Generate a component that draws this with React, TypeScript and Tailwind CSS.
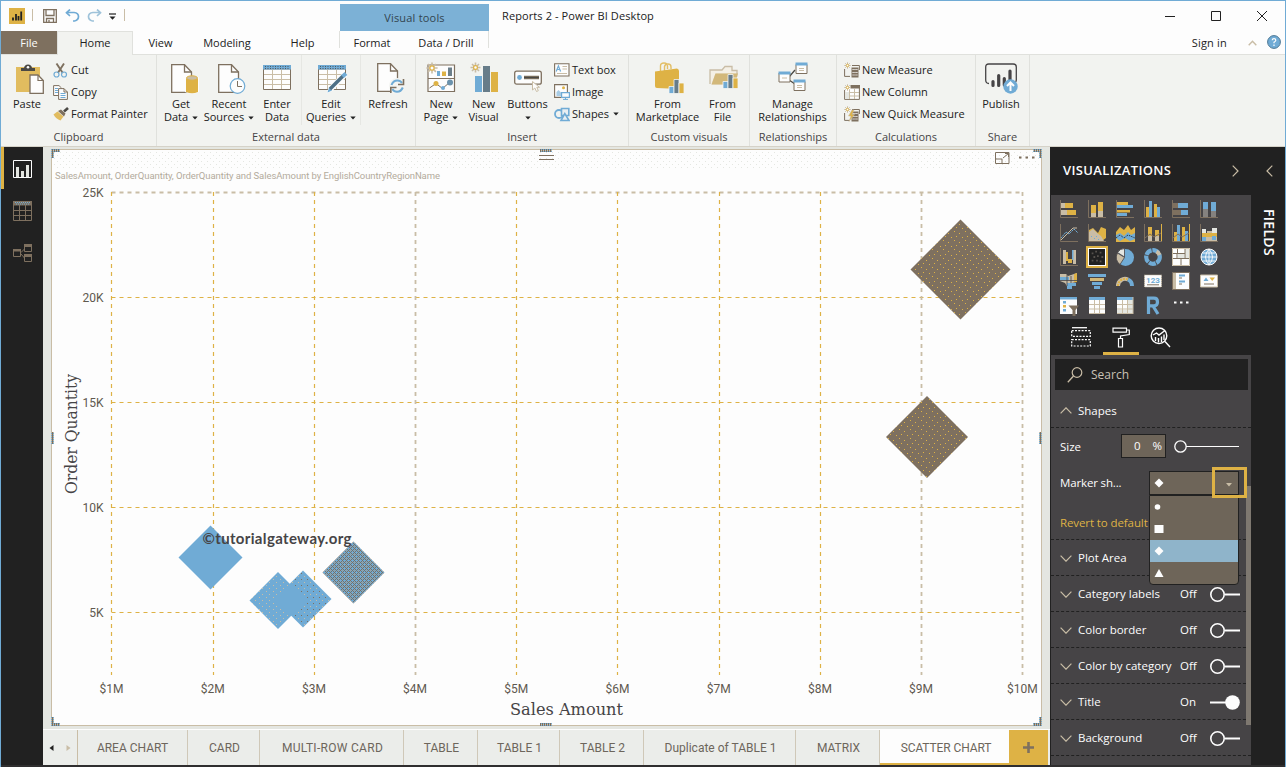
import React from "react";

const Y = "#deb245";
const B = "#70abd5";
const N = "#7e705f";
const T = "#c9bda6";
const D = "#212121";
const L = "#e4e6e1";
const W = "#fdfdfd";

type Kids = { children?: React.ReactNode };

/* ---------- helpers ---------- */

function Ico({ w, h, className = "", children }: { w: number; h: number; className?: string } & Kids) {
  return (
    <svg width={w} height={h} viewBox={`0 0 ${w} ${h}`} className={`block shrink-0 ${className}`} fill="none">
      {children}
    </svg>
  );
}

function Spark({ x, y, r = 5 }: { x: number; y: number; r?: number }) {
  const d = r * 0.7;
  return (
    <g stroke={T} strokeWidth={r > 4 ? 1.6 : 1}>
      <path d={`M${x} ${y - r}V${y + r}M${x - r} ${y}H${x + r}M${x - d} ${y - d}L${x + d} ${y + d}M${x + d} ${y - d}L${x - d} ${y + d}`} />
      <circle cx={x} cy={y} r={r * 0.38} fill={W} stroke={Y} strokeWidth={r > 4 ? 1.2 : 0.9} />
    </g>
  );
}

function Page() {
  return (
    <g>
      <path d="M.7.7H13.5L20.5 8V28.3H.7Z" fill={W} stroke={N} strokeWidth="1.3" />
      <path d="M13.5.7V8H20.5" stroke={N} strokeWidth="1.3" />
    </g>
  );
}

function Caret({ className = "ml-1" }: { className?: string }) {
  return (
    <svg width="6" height="4" viewBox="0 0 6 4" className={`inline-block align-middle ${className}`}>
      <path d="M.3.5H5.7L3 3.5Z" fill={D} />
    </svg>
  );
}

/* ---------- ribbon icons ---------- */

const PasteIcon = () => (
  <Ico w={29} h={31} className="mt-[2px] ml-[7px]">
    <path d="M0 3H24V28H0Z" fill={Y} opacity=".85" />
    <path d="M5 7V4H8Q8.500 .5 12 .5T16 4H19V7Z" fill="#4a4844" />
    <circle cx="12" cy="3.200" r="1.300" fill={W} />
    <path d="M14 11H22L27.300 16.500V29.300H14Z" fill={W} stroke={N} strokeWidth="1.300" />
    <path d="M22 11V16.500H27.300" stroke={N} strokeWidth="1.200" />
  </Ico>
);
const CutIcon = () => (
  <Ico w={15} h={15}>
    <path d="M3.500.5 9.800 10M11 .5 4.800 10" stroke={N} strokeWidth="1.900" />
    <circle cx="3.500" cy="11.500" r="2.500" stroke={B} strokeWidth="1.200" />
    <circle cx="11" cy="11.500" r="2.500" stroke={B} strokeWidth="1.200" />
  </Ico>
);
const CopyIcon = () => (
  <Ico w={15} h={15}>
    <path d="M.6.6H6L8.500 3V10.500H.6Z" fill={W} stroke={N} />
    <path d="M2 3.500H5M2 5.500H5M2 7.500H5" stroke={B} />
    <path d="M5.600 3.600H11L14.400 7V14.400H5.600Z" fill={W} stroke={N} />
    <path d="M7.500 8.500H12.500M7.500 10.500H12.500M7.500 12.500H12.500" stroke={B} />
    <path d="M11 3.600V7H14.400" stroke={N} />
  </Ico>
);
const PainterIcon = () => (
  <Ico w={16} h={14}>
    <path d="M.5 7.500 4.500 4.500 10.500 9.500 7.500 13.500Q3 12 .5 7.500Z" fill={Y} opacity=".85" />
    <path d="M5 4 8 2.500 12.500 6.500 11 9.500Z" fill={N} />
    <path d="M11 4.500 15 1" stroke="#4a4844" strokeWidth="2.600" />
  </Ico>
);
const GetDataIcon = () => (
  <Ico w={28} h={30} className="mt-[2px] ml-[7px]">
    <Page />
    <path d="M14 14V28Q20.500 31 28 28V13Z" fill={W} />
    <path d="M15 14.500V28Q21 30.500 27 28V14.500Z" fill={Y} />
    <ellipse cx="21" cy="14" rx="5.500" ry="2.200" fill={T} stroke={Y} />
  </Ico>
);
const RecentIcon = () => (
  <Ico w={28} h={30} className="mt-[2px] ml-[6px]">
    <Page />
    <circle cx="19.500" cy="22" r="7.300" fill={W} stroke={B} strokeWidth="1.200" />
    <path d="M19.500 17V22.500H24" stroke={N} />
  </Ico>
);
const Grid28 = () => (
  <g>
    <path d="M.5 5H27.500V25.500H.5Z" fill={W} stroke={N} />
    <path d="M1 10.500H27M1 15.500H27M1 20.500H27M9.500 5V25M18.500 5V25" stroke={T} />
    <path d="M0 1H28V5.500H0Z" fill={B} />
    <path d="M2 2.500H27M2 4.500H27" stroke="#4b5963" strokeDasharray="1 1.500" />
  </g>
);
const EnterIcon = () => (
  <Ico w={28} h={30} className="mt-[2px]">
    <Grid28 />
  </Ico>
);
const EditIcon = () => (
  <Ico w={30} h={31} className="mt-[2px] ml-[3px]">
    <Grid28 />
    <path d="M8.500 29.500 11 22.500 25 8.500 29.500 12 15 26.500Z" fill={W} />
    <path d="M9.500 28.500 11 23.500 14 26.500Z" fill={B} />
    <path d="M12 25 25 12" stroke="#4f7086" strokeWidth="3.600" />
    <path d="M24.500 12.500 28 9.500" stroke={B} strokeWidth="4" />
  </Ico>
);
const RefreshIcon = () => (
  <Ico w={28} h={31} className="mt-[1px] ml-[6px]">
    <Page />
    <circle cx="20" cy="23" r="8" fill="#f4f5f2" />
    <path d="M14.500 22Q16 17.500 20.500 17.500Q23.500 17.500 25 20M25.800 24.500Q24 28.800 20 28.800Q17 28.800 15.300 26" stroke={B} strokeWidth="2" />
    <path d="M26.500 16V21.500H21M13.800 30V24.500H19.500" stroke={N} strokeWidth="1.600" />
  </Ico>
);
const NewPageIcon = () => (
  <Ico w={30} h={31}>
    <path d="M2 3H28.500V29.500H2Z" fill={W} stroke={N} strokeWidth="1.200" />
    <path d="M2 16.500H28.500" stroke={N} />
    <path d="M11 9H14V14H11Z" fill={B} />
    <path d="M16 9.500H20V14H16Z" fill={Y} />
    <path d="M22 5.500H26V14H22Z" fill="#6c7f8a" />
    <path d="M3.500 26 10 21.500 16.500 26.500 23.500 20.500" stroke={N} />
    <circle cx="10" cy="21.500" r="2.500" fill={Y} />
    <circle cx="17" cy="26" r="2" fill={B} />
    <circle cx="24" cy="20.500" r="3" fill="#6c93ad" />
    <Spark x={6} y={6} r={5.600} />
  </Ico>
);
const NewVisualIcon = () => (
  <Ico w={28} h={31}>
    <path d="M5 14H12V30H5Z" fill={B} />
    <path d="M13 4H20V30H13Z" fill="#677c89" />
    <path d="M21 10H28V30H21Z" fill={Y} />
    <Spark x={5.500} y={5.500} r={5} />
  </Ico>
);
const ButtonsIcon = () => (
  <Ico w={29} h={31} className="ml-[2px]">
    <rect x=".7" y="9.200" width="26.600" height="13" rx="2" fill={W} stroke={N} strokeWidth="1.300" />
    <circle cx="5.500" cy="15.500" r="2.400" fill={B} />
    <path d="M10 15.500H25" stroke={N} strokeWidth="3.500" />
    <path d="M10 15.500H25" stroke="#4a4844" strokeWidth="1.200" />
    <path d="M18.500 19.500V28L20.800 26 22.500 29.500 24.300 28.700 22.800 25.300H25.500Z" fill={W} stroke={T} />
  </Ico>
);
const TextBoxIcon = () => (
  <Ico w={16} h={14}>
    <path d="M.6.8H15V13H.6Z" fill={W} stroke={N} strokeWidth="1.100" />
    <path d="M2.200 8.500 4.400 2.800 6.600 8.500M3 6.500H5.800" stroke={B} strokeWidth="1.200" />
    <path d="M8.500 3.500H13M8.500 6H13M3 10.500H13" stroke={T} />
  </Ico>
);
const ImageIcon = () => (
  <Ico w={16} h={16}>
    <path d="M.6.6H13.400V13.400H.6Z" fill={W} stroke={N} strokeWidth="1.100" />
    <path d="M2.500 12V8L4.500 6 7.500 9V12Z" fill={B} opacity=".6" />
    <circle cx="9.500" cy="3.800" r="1.500" fill={Y} />
    <path d="M7.600 8.600H15.400V13.400H7.600Z" fill={W} stroke={B} strokeWidth="1.200" />
    <path d="M11.500 13.500V15.400M9 15.400H14" stroke={B} />
  </Ico>
);
const ShapesIcon = () => (
  <Ico w={16} h={15}>
    <circle cx="5" cy="7" r="4" stroke={B} strokeWidth="1.800" />
    <path d="M7.500 1.500H14.800V8.500H7.500Z" fill="#e8eef2" stroke={B} strokeWidth="1.600" />
    <path d="M7 13.500 10.800 6.500 15 13.500Z" fill="#e8eef2" stroke={B} strokeWidth="1.600" />
  </Ico>
);
const MiniBars = ({ x, y }: { x: number; y: number }) => (
  <g transform={`translate(${x} ${y})`} stroke="#f4f5f2" strokeWidth=".8">
    <path d="M0 7H5V14H0Z" fill={B} />
    <path d="M5 0H10V14H5Z" fill="#677c89" />
    <path d="M10 3.500H15V14H10Z" fill={Y} />
  </g>
);
const MarketIcon = () => (
  <Ico w={30} h={32} className="ml-[2px]">
    <path d="M6.500 9V4Q6.500 1 10 1T13.500 4V7M10.500 9V4.500Q11 2 14 2T17 5V7" stroke={Y} strokeWidth="1.400" opacity=".8" />
    <path d="M1 9.500 23 6.500Q25 7 25 9V27L3 26Q1 26 1 24Z" fill={Y} />
    <MiniBars x={15} y={17.500} />
  </Ico>
);
const FileIcon = () => (
  <Ico w={30} h={32} className="ml-[2px]">
    <path d="M1 22V8H13L16 4.500H23V8.500H28V12" stroke={T} strokeWidth="1.300" fill="#f4f0e6" />
    <path d="M2.500 22.500 6.500 11.500H29L26 22.500Z" fill={T} />
    <path d="M2.500 22.500 6.500 11.500H29L26 22.500Z" fill={Y} opacity=".45" />
    <MiniBars x={14} y={12.500} />
  </Ico>
);
const RelIcon = () => (
  <Ico w={30} h={30}>
    <path d="M11 15 17 8M11 18 17 22" stroke="#4a4844" strokeWidth="1.300" />
    <g fill={W} stroke={N}>
      <path d="M1 11H12V20H1Z" />
      <path d="M18 2.500H29V11.500H18Z" />
      <path d="M16 19.500H27V28.500H16Z" />
    </g>
    <path d="M.5 9.500H12.500V12.500H.5ZM17.500.5H29.500V3.500H17.500ZM15.500 17.500H27.500V20.500H15.500Z" fill={B} />
    <path d="M4 16H9M21 6.500H26M21 8.500H26M19 23.500H24M19 25.500H24" stroke={T} />
  </Ico>
);
const CalcIcon = ({ kind }: { kind: "measure" | "column" | "quick" }) => (
  <Ico w={16} h={16}>
    {kind === "column" ? (
      <g>
        <path d="M.6 6V15.400H15.400V1.600H7" fill={W} stroke={N} />
        <path d="M1 8H5V15H1Z" fill={L} />
        <path d="M6.500 1H16V4.500H6.500Z" fill={N} />
        <path d="M5.500 6V15M10.500 5V15M5 8.500H15M5 12H15" stroke={T} />
      </g>
    ) : (
      <g>
        <path d="M.6 7V14.400H6M8 3.500H15.400V8" stroke={N} />
        <path d="M7.500 5.500H14.500V15.500H7.500Z" fill={N} />
        <path d="M8.500 7.500H13.500M8.500 10.500H13.500M8.500 13H13.500" stroke={W} strokeDasharray="1.200 .7" />
        {kind === "quick" && <path d="M8 4 4.500 10H7L5 15.500 10.500 8.500H8L10 4Z" fill={Y} stroke={T} strokeWidth=".6" />}
      </g>
    )}
    <Spark x={3.500} y={3.500} r={3.200} />
  </Ico>
);
const PublishIcon = () => (
  <Ico w={34} h={32}>
    <path d="M5 21.500Q1.700 21.500 1.700 18V5Q1.700 2 4.700 2H29.300Q32.300 2 32.300 5V18Q32.300 20 30.500 21.500" stroke="#464446" strokeWidth="1.300" />
    <path d="M9 19.500V23.500M14.700 13.500V23.500M20.300 16.500V23M26 9V20" stroke="#464446" strokeWidth="3.200" strokeLinecap="round" />
    <circle cx="26.500" cy="24.500" r="7.200" fill={B} />
    <path d="M26.500 29V21M23 24 26.500 20.500 30 24" stroke={W} strokeWidth="2" />
  </Ico>
);

/* ---------- ribbon ---------- */

function Group({ label, className, children }: { label: string; className: string } & Kids) {
  return (
    <div className={`flex h-full shrink-0 flex-col border-r border-[#e0e1dd] ${className}`}>
      <div className="flex h-[74px] items-start">{children}</div>
      <div className="text-center text-[11px] leading-4 whitespace-nowrap text-[#464446]">{label}</div>
    </div>
  );
}

function Big({ icon, a, b, caret, className }: { icon: React.ReactNode; a: string; b?: string; caret?: boolean; className: string }) {
  return (
    <div className={`flex shrink-0 flex-col items-center pt-[7px] ${className}`}>
      <div className="flex h-[35px] items-start justify-center">{icon}</div>
      <div className="text-center text-[11px] leading-[13px] whitespace-nowrap text-[#212121]">
        <div>{a}</div>
        <div>
          {b}
          {caret && <Caret className={b ? "ml-1" : ""} />}
        </div>
      </div>
    </div>
  );
}

function Small({ icon, label, caret }: { icon: React.ReactNode; label: string; caret?: boolean }) {
  return (
    <div className="flex h-[22px] items-center text-[11px] whitespace-nowrap text-[#212121]">
      <div className="w-[18px] shrink-0">{icon}</div>
      <span>{label}</span>
      {caret && <Caret />}
    </div>
  );
}

function Ribbon() {
  return (
    <div className="flex h-[92px] border-t border-[#e0e1dd] bg-[#f2f3f0]">
      <Group label="Clipboard" className="w-[156px]">
        <Big icon={<PasteIcon />} a="Paste" className="w-[52px]" />
        <div className="pt-1">
          <Small icon={<CutIcon />} label="Cut" />
          <Small icon={<CopyIcon />} label="Copy" />
          <Small icon={<PainterIcon />} label="Format Painter" />
        </div>
      </Group>
      <Group label="External data" className="w-[259px]">
        <Big icon={<GetDataIcon />} a="Get" b="Data" caret className="w-12" />
        <Big icon={<RecentIcon />} a="Recent" b="Sources" caret className="w-12" />
        <Big icon={<EnterIcon />} a="Enter" b="Data" className="h-[70px] w-[49px] border-r border-[#e6e7e3]" />
        <Big icon={<EditIcon />} a="Edit" b="Queries" caret className="h-[70px] w-[59px] border-r border-[#e6e7e3]" />
        <Big icon={<RefreshIcon />} a="Refresh" className="w-[54px]" />
      </Group>
      <Group label="Insert" className="w-[213px]">
        <Big icon={<NewPageIcon />} a="New" b="Page" caret className="w-[50px]" />
        <Big icon={<NewVisualIcon />} a="New" b="Visual" className="w-[35px]" />
        <Big icon={<ButtonsIcon />} a="Buttons" b="" caret className="w-[53px]" />
        <div className="pt-1">
          <Small icon={<TextBoxIcon />} label="Text box" />
          <Small icon={<ImageIcon />} label="Image" />
          <Small icon={<ShapesIcon />} label="Shapes" caret />
        </div>
      </Group>
      <Group label="Custom visuals" className="w-[121px]">
        <Big icon={<MarketIcon />} a="From" b="Marketplace" className="w-[77px]" />
        <Big icon={<FileIcon />} a="From" b="File" className="w-[33px]" />
      </Group>
      <Group label="Relationships" className="w-[87px]">
        <Big icon={<RelIcon />} a="Manage" b="Relationships" className="w-[85px]" />
      </Group>
      <Group label="Calculations" className="w-[139px]">
        <div className="pt-1 pl-[7px]">
          <Small icon={<CalcIcon kind="measure" />} label="New Measure" />
          <Small icon={<CalcIcon kind="column" />} label="New Column" />
          <Small icon={<CalcIcon kind="quick" />} label="New Quick Measure" />
        </div>
      </Group>
      <Group label="Share" className="w-[54px]">
        <Big icon={<PublishIcon />} a="Publish" className="w-[50px]" />
      </Group>
    </div>
  );
}

/* ---------- title bar and tabs ---------- */

function TitleBar() {
  return (
    <div className="flex h-[30px] items-center">
      <Ico w={16} h={16} className="mb-px ml-2">
        <path d="M0 0H16V16H0Z" fill={Y} />
        <path d="M4 9.500V12.500M7 6V12.500M9.500 8V12.500M12.200 3.500V12.500" stroke={D} strokeWidth="1.800" />
      </Ico>
      <div className="mb-0.5 ml-[7px] h-3 w-px bg-[#c9bda6]" />
      <Ico w={14} h={14} className="ml-[10px]">
        <path d="M.7.7H13.300V13.300H.7ZM3 1V6.500H11V1M3.500 13V9.500H10.500V13M6 11V13" stroke={N} strokeWidth="1.300" />
      </Ico>
      <Ico w={15} h={13} className="mb-px ml-2">
        <path d="M1.500 3.500H9Q13.500 4 13.500 7.500T9.500 12H8" stroke={B} strokeWidth="1.700" />
        <path d="M5 .5 1.500 3.700 5 7" stroke={B} strokeWidth="1.700" />
      </Ico>
      <Ico w={15} h={13} className="mb-px ml-[7px]">
        <path d="M13.500 3.500H6Q1.500 4 1.500 7.500T5.500 12H7" stroke="#9fc3da" strokeWidth="1.700" />
        <path d="M10 .5 13.500 3.700 10 7" stroke="#9fc3da" strokeWidth="1.700" />
      </Ico>
      <Ico w={7} h={7} className="mt-px ml-[7px]">
        <path d="M0 1H7" stroke={D} strokeWidth="1.200" />
        <path d="M.5 3.500H6.500L3.500 6.800Z" fill={D} />
      </Ico>
      <div className="mb-0.5 ml-2 h-3 w-px bg-[#c9bda6]" />
      <div className="ml-[215px] flex h-[27px] w-[149px] items-center justify-center self-end bg-[#7cb1d6] pt-0.5 text-[11px] tracking-[.2px] text-[#33454f]">
        Visual tools
      </div>
      <div className="ml-[13px] text-[11px] tracking-[.1px] whitespace-nowrap text-[#212121]">Reports 2 - Power BI Desktop</div>
      <div className="ml-auto flex items-center gap-9 pr-[18px] pb-px">
        <Ico w={10} h={10}>
          <path d="M0 5.500H10" stroke={D} />
        </Ico>
        <Ico w={10} h={10}>
          <path d="M.5.500H9.500V9.500H.5Z" stroke={D} />
        </Ico>
        <Ico w={10} h={10}>
          <path d="M0 0 10 10M10 0 0 10" stroke={D} />
        </Ico>
      </div>
    </div>
  );
}

function MenuTabs() {
  return (
    <div className="flex h-[23px] text-[11px] leading-[23px] text-[#212121]">
      <div className="w-[56px] bg-[#7e705f] text-center text-[#fdfdfd]">File</div>
      <div className="z-10 -mb-px w-[76px] border-x border-t border-[#e0e1dd] bg-[#f2f3f0] text-center leading-[22px]">Home</div>
      <div className="w-[55px] text-center">View</div>
      <div className="w-[78px] text-center">Modeling</div>
      <div className="w-[73px] text-center">Help</div>
      <div className="flex h-[17px] w-[150px] border-x border-[#e0e1dd]">
        <div className="w-[64px] text-center">Format</div>
        <div className="w-[84px] text-center tracking-[.05px]">Data / Drill</div>
      </div>
      <div className="ml-auto flex items-center">
        <span className="mr-[21px] tracking-[.2px]">Sign in</span>
        <Ico w={9} h={6}>
          <path d="M.7 5.300 4.500 1.300 8.300 5.300" stroke={T} strokeWidth="1.400" />
        </Ico>
        <Ico w={14} h={14} className="mr-1 mb-0.5 ml-[10px]">
          <circle cx="7" cy="7" r="6.400" fill={B} stroke="#4e7894" />
          <path d="M5.200 5.300Q5.300 3.700 7 3.700T8.800 5.300Q8.800 6.300 7 7.200V8.300M7 9.500V11" stroke={W} strokeWidth="1.200" />
        </Ico>
      </div>
    </div>
  );
}

/* ---------- left rail ---------- */

function Rail() {
  return (
    <div className="flex w-[42px] shrink-0 flex-col bg-[#212121]">
      <div className="flex h-[42px] items-center border-l-[3px] border-[#deb245] pt-0.5 pl-[9px]">
        <Ico w={19} h={18}>
          <path d="M.5.500H18.500V17.500H.5Z" stroke={W} />
          <path d="M4.500 7V17M9.500 11V17M14.500 5V17" stroke={L} strokeWidth="3" />
        </Ico>
      </div>
      <div className="flex h-[44px] items-center pl-3">
        <Ico w={19} h={20}>
          <path d="M.5.500H18.500V19.500H.5ZM.5 9.500H18.500M.5 14.500H18.500M6.500 4V19M12.500 4V19" stroke={N} />
          <path d="M0 0H19V4.500H0Z" fill={N} />
          <path d="M2 1.500H17M3 3H17" stroke={B} strokeDasharray="1 1" />
        </Ico>
      </div>
      <div className="flex h-[40px] items-center pl-3">
        <Ico w={19} h={18}>
          <path d="M.5 6H7.500V12.500H.5ZM11.500 1.500H18.500V7.500H11.500ZM11.500 11.500H18.500V17.500H11.500ZM8 8.500 11.500 5M8 10 11.500 14" stroke={N} />
          <path d="M0 5H8V7.500H0ZM11 0H19V3H11ZM11 10H19V13H11Z" fill={N} />
        </Ico>
      </div>
    </div>
  );
}

/* ---------- chart ---------- */

const xs = Array.from({ length: 10 }, (_, i) => 60.500 + i * 101.200);
const ys = [43.500, 148.500, 253.500, 358.500, 463.500];
const marks = [
  { x: 909.500, y: 120.500, r: 50, f: "url(#pd)" },
  { x: 876, y: 288, r: 41, f: "url(#pd)" },
  { x: 159.500, y: 408.500, r: 32, f: B },
  { x: 252, y: 450, r: 28.500, f: "url(#pb)" },
  { x: 227, y: 451.500, r: 28.500, f: "url(#pl)" },
  { x: 239.500, y: 451, r: 16, f: B },
  { x: 302.500, y: 423.500, r: 31, f: "url(#pm)" },
];

function Chart() {
  return (
    <div className="ml-2 mt-[2px] h-[577px] w-[991px] bg-[#fdfdfd]">
      <svg width="991" height="577" viewBox="0 0 991 577" className="block overflow-visible" fontFamily="Roboto, sans-serif">
        <defs>
          <pattern id="pd" width="11" height="9" patternUnits="userSpaceOnUse">
            <path d="M0 0H11V9H0Z" fill={N} />
            <path d="M1 1H2V2H1ZM6 3H7V4H6ZM3 6H4V7H3ZM9 7H10V8H9Z" fill={Y} />
          </pattern>
          <pattern id="pb" width="6" height="6" patternUnits="userSpaceOnUse">
            <path d="M0 0H6V6H0Z" fill={B} />
            <path d="M1 1H2V2H1Z" fill={T} />
            <path d="M4 4H5V5H4Z" fill={N} />
          </pattern>
          <pattern id="pl" width="7" height="6" patternUnits="userSpaceOnUse">
            <path d="M0 0H7V6H0Z" fill={B} />
            <path d="M1 1H2V2H1ZM5 4H6V5H5Z" fill={T} />
          </pattern>
          <pattern id="pm" width="4" height="4" patternUnits="userSpaceOnUse">
            <path d="M0 0H4V4H0Z" fill={B} />
            <path d="M0 0H1V1H0ZM1 1H2V2H1ZM2 2H3V3H2ZM3 3H4V4H3ZM2 0H3V1H2ZM0 2H1V3H0Z" fill={N} />
            <path d="M3 1H4V2H3Z" fill="#a59a88" />
          </pattern>
          <pattern id="pg" width="6" height="6" patternUnits="userSpaceOnUse">
            <path d="M0 0H1V1H0ZM3 3H4V4H3Z" fill={L} />
          </pattern>
          <pattern id="ph" width="2" height="2" patternUnits="userSpaceOnUse">
            <path d="M0 0H2V2H0Z" fill={T} />
            <path d="M0 0H1V1H0Z" fill={B} />
            <path d="M1 0H2V2H1Z" fill={N} />
          </pattern>
        </defs>
        <path d="M1 1H990V20H1Z" fill="url(#pg)" />
        <path d="M.5.500H990.500V576.500H.5Z" stroke={T} fill="none" />
        <g stroke={Y} strokeDasharray="4 4">
          {ys.map((y, i) => (
            <path key={y} d={`M60.500 ${y}H971.500`} stroke={i === 0 ? T : Y} strokeWidth={i === 0 ? 1.800 : 1.200} />
          ))}
          {xs.map((x, i) => (
            <path key={x} d={`M${Math.round(x - 0.2) + 0.5} 43V526`} stroke={i === 3 || i > 7 ? T : Y} strokeWidth={i === 3 || i > 7 ? 1.800 : 1.200} />
          ))}
        </g>
        {marks.map((m) => (
          <path key={m.x} d={`M${m.x} ${m.y - m.r}L${m.x + m.r} ${m.y}L${m.x} ${m.y + m.r}L${m.x - m.r} ${m.y}Z`} fill={m.f} />
        ))}
        <text x="4" y="30" fontSize="9.500" fill="#b3ab9c" textLength="385">
          SalesAmount, OrderQuantity, OrderQuantity and SalesAmount by EnglishCountryRegionName
        </text>
        <g fontSize="12" fill="#5f594f">
          {["25K", "20K", "15K", "10K", "5K"].map((s, i) => (
            <text key={s} x="52.500" y={ys[i] + 4.500} textAnchor="end">
              {s}
            </text>
          ))}
          {xs.map((x, i) => (
            <text key={x} x={x} y="544" textAnchor="middle">
              {`$${i + 1}M`}
            </text>
          ))}
        </g>
        <g fontFamily="'DejaVu Serif Condensed', 'DejaVu Serif', serif" fontSize="17" fill="#464446">
          <text x="459" y="566" textLength="113" lengthAdjust="spacingAndGlyphs">
            Sales Amount
          </text>
          <text transform="translate(26 345) rotate(-90)" textLength="120" lengthAdjust="spacingAndGlyphs">
            Order Quantity
          </text>
        </g>
        <text x="151.500" y="395" fontFamily="Lato, sans-serif" fontWeight="700" fontSize="15" fill="#464446" textLength="149">
          ©tutorialgateway.org
        </text>
        <path d="M488 6.500H503M488 10.500H503" stroke={N} />
        <g stroke={N}>
          <path d="M944.500 3.500H958V14.500H944.500ZM944.500 10H951V14.500M952 9 957.500 4.500M954 4.500H957.500V8" fill="none" />
          <path d="M968 8.500H970.500M974.500 8.500H977M981 8.500H983.500" strokeWidth="2" />
        </g>
        <path
          d="M0 0H9V3H3V9H0ZM991 0H982V3H988V9H991ZM0 577H9V574H3V568H0ZM991 577H982V574H988V568H991ZM489 0H501V3H489ZM489 574H501V577H489ZM0 283H3V295H0ZM988 283H991V295H988Z"
          fill="url(#ph)"
        />
      </svg>
    </div>
  );
}

/* ---------- page tabs ---------- */

const tabs: [string, string][] = [
  ["AREA CHART", "w-[110px]"],
  ["CARD", "w-[72px] pl-0.5"],
  ["MULTI-ROW CARD", "w-[144px] pl-0.5 tracking-[.3px]"],
  ["TABLE", "w-[74px] pl-0.5"],
  ["TABLE 1", "w-[82px] pl-0.5"],
  ["TABLE 2", "w-[84px] pl-0.5"],
  ["Duplicate of TABLE 1", "w-[152px] pl-0.5"],
  ["MATRIX", "w-[84px] pl-0.5"],
];

function PageTabs() {
  return (
    <div className="mt-auto flex h-9 border-t border-[#fdfdfd] bg-[#ebedea] font-[Roboto,sans-serif] text-[12px] text-[#6d665c]">
      <div className="flex w-[35px] items-center gap-3 border-r border-[#c9bda6] pl-[6px]">
        <Ico w={5} h={6}>
          <path d="M4.500 0V6L.5 3Z" fill={D} />
        </Ico>
        <Ico w={5} h={6}>
          <path d="M.5 0V6L4.500 3Z" fill={T} />
        </Ico>
      </div>
      {tabs.map(([name, w]) => (
        <div key={name} className={`flex shrink-0 items-center justify-center border-r border-[#cfc8b8] whitespace-nowrap ${w}`}>
          {name}
        </div>
      ))}
      <div className="flex w-[129px] shrink-0 items-center justify-center border-b-2 border-[#deb245] bg-[#fdfdfd] pt-[2px] pl-[3px] tracking-[-.1px] whitespace-nowrap">
        SCATTER CHART
      </div>
      <div className="flex w-[39px] items-center justify-center bg-[#deb245]">
        <Ico w={11} h={11}>
          <path d="M5.500 0V11M0 5.500H11" stroke={N} strokeWidth="2.600" />
        </Ico>
      </div>
    </div>
  );
}

/* ---------- visualizations pane ---------- */

const axis = <path d="M.5 0V17.500H18" stroke={N} />;
const visIcons: React.ReactNode[] = [
  <>{axis}<path d="M1 3H5V8H1ZM1 10H7V15H1Z" fill={T} /><path d="M5 3H13V8H5ZM7 10H16V15H7Z" fill={Y} /></>,
  <>{axis}<path d="M3 5H8V13H3ZM10 2H15V11H10Z" fill={Y} /><path d="M3 13H8V17H3ZM10 11H15V17H10Z" fill={T} /></>,
  <>{axis}<path d="M1 2H12V5H1ZM1 10H14V12.500H1Z" fill={Y} /><path d="M1 5H17V8H1ZM1 13H11V16H1Z" fill={B} /></>,
  <>{axis}<path d="M2 7H5V17H2ZM10 4H13V17H10Z" fill={Y} /><path d="M5 1H8V17H5ZM13 7H16V17H13Z" fill={B} /></>,
  <>{axis}<path d="M1 3H6V8H1ZM1 10H9V15H1Z" fill={N} /><path d="M6 3H16V8H6ZM9 10H16V15H9Z" fill={B} /></>,
  <>{axis}<path d="M3 2H8V9H3ZM11 2H16V11H11Z" fill={B} /><path d="M3 9H8V17H3ZM11 11H16V17H11Z" fill="#85827f" /></>,
  <>{axis}<path d="M1 14 6 8 9 10 14 5 18 9" stroke={B} strokeDasharray="2 .6" /><path d="M1 16 6 11 13 4 17 4" stroke={T} /></>,
  <>{axis}<path d="M1 17V6L5 4 10 9 13 3 18 5V14L14 17Z" fill={Y} /><path d="M1 17V8L5 5 9 9 13 12 16 17Z" fill={T} /><path d="M3 12H4V13H3ZM6 14H7V15H6ZM8 12H9V13H8ZM10 15H11V16H10Z" fill={B} /></>,
  <><path d="M0 18V8L4 3 8 6 12 1 15 6 19 3V18Z" fill={Y} /><path d="M0 11 4 9 8 12 12 8 15 11 19 9V15L14 17 9 14 4 17 0 14Z" fill={B} /><path d="M0 14 4 11 8 14 12 11 19 14" stroke={D} strokeDasharray="1 1" /></>,
  <>{axis}<path d="M17.500 0V17" stroke={Y} /><path d="M4 3H8V12H4ZM11 6H15V12H11Z" fill={Y} /><path d="M4 12H8V17H4ZM11 12H15V17H11Z" fill={T} /><path d="M1 14 6 10 10 13 17 9" stroke={N} /></>,
  <>{axis}<path d="M17.500 0V17" stroke={Y} /><path d="M2 8H5V17H2ZM10 3H13V17H10Z" fill={Y} /><path d="M5 1H8V17H5ZM13 7H16V17H13Z" fill={B} /><path d="M1 14 6 10 10 13 17 9" stroke={N} /></>,
  <>{axis}<path d="M2 5H6V9H2ZM12 4H17V9H12Z" fill={L} /><path d="M2 9H17V13H2Z" fill={Y} /><path d="M2 13H17V17H2ZM7 7H12V9H7Z" fill={T} /><path d="M2 13H6V17H2ZM12 12H16V16H12Z" fill={B} /></>,
  <>{axis}<path d="M3 2H6V16H3ZM13 2H16V16H13Z" fill={T} /><path d="M6 4H8V13H6ZM8 11H12V15H8Z" fill={Y} /><path d="M12 2H13.500V12H12Z" fill={B} /></>,
  <><path d="M0 0H18V18H0Z" fill={D} /><path d="M3 4H5V6H3ZM7 2H9V4H7ZM12 3H14V5H12ZM5 8H7V10H5ZM9 7H11V9H9ZM14 8H16V10H14ZM3 12H5V14H3ZM8 12H10V14H8ZM12 13H14V15H12Z" fill="#57524d" /></>,
  <><circle cx="9.500" cy="9.500" r="8.500" fill={B} /><path d="M8.500 9V.5A8.500 8.500 0 0 0 1.500 4.500Z" fill={L} stroke="#464446" strokeWidth=".8" /><path d="M8.500 9.500 1.500 5A8.500 8.500 0 0 0 4 16.500Z" fill={T} stroke="#464446" strokeWidth=".8" /></>,
  <><circle cx="9" cy="9" r="6.800" stroke={B} strokeWidth="4.200" strokeDasharray="7 .8" /><path d="M12.500 3.500A6.500 6.500 0 0 1 15.500 7" stroke={T} strokeWidth="4" /></>,
  <><path d="M0 0H18V18H0Z" fill={W} /><path d="M6 6H12V10H6ZM13 1H17V10H13Z" fill={L} /><path d="M0 10.500H18M5.500 5V0M0 5.500H13M5 5V10M13 0V10M9 11V18" stroke={N} /><path d="M.5.500H17.500V17.500H.5Z" stroke={T} /></>,
  <><circle cx="9" cy="9" r="8" fill={B} stroke={W} /><path d="M1 9H17M2.500 5H15.500M2.500 13H15.500M9 1V17M9 1Q2 9 9 17M9 1Q16 9 9 17" stroke={W} strokeWidth=".9" /></>,
  <><path d="M0 2H6L8 4 17 1V10L12 11 8 16 5 11 0 9Z" fill={T} /><path d="M0 5H9V8H0ZM7 11H16V14H12V17H7Z" fill={B} /><path d="M14 2 17 1V10H14Z" fill={Y} /><path d="M0 8.500H17M7 3V14M11 4V11" stroke="#464446" strokeWidth=".8" /></>,
  <><path d="M0 2H18V5H0ZM4 10H14V13H4ZM6 14H12V17H6Z" fill={B} /><path d="M2 6H16V9H2Z" fill={T} /><path d="M2 6H16V9H2Z" fill={Y} opacity=".5" /></>,
  <><path d="M2 14A7 7 0 0 1 12 7.500" stroke={T} strokeWidth="4" /><path d="M2 14A7 7 0 0 1 12 7.500" stroke={Y} strokeWidth="2" strokeDasharray="2 1" /><path d="M12 7.500A7 7 0 0 1 16 14" stroke={B} strokeWidth="4" /></>,
  <><path d="M.5 3H17.500V15H.5Z" fill={W} stroke={T} strokeDasharray="1 1" /><text x="9" y="11" fontSize="8" fontWeight="700" textAnchor="middle" fill={B} fontFamily="Roboto, sans-serif">123</text><path d="M3 12.800H15" stroke={N} /></>,
  <><path d="M.5.500H17.500V17.500H.5Z" fill={W} stroke={N} /><path d="M1 1H4V17H1Z" fill={T} /><path d="M7 3.500H13M7 9.500H13" stroke={B} strokeWidth="2" /><path d="M7 6H10M7 12H10" stroke={N} /></>,
  <><path d="M.5 3H17.500V15H.5Z" fill={W} stroke={T} /><path d="M3.500 9 6 5.500 8.500 9Z" fill={B} /><path d="M9.500 5.500H15L12.200 9Z" fill={Y} /><path d="M4 12H14" stroke={N} /></>,
  <><path d="M0 1H17V18H0Z" fill={W} /><path d="M0 1H17V3.500H0Z" fill={B} /><path d="M3 5H6V7.500H3Z" fill={B} /><path d="M3 9H6V11.500H3Z" fill={Y} /><path d="M3 13H6V15.500H3Z" fill={B} /><path d="M8.500 9.500H19L15.500 14V20H12.500V14Z" fill={N} /></>,
  <><path d="M1 1H17V18H1Z" fill={W} /><path d="M1 1H17V4H1Z" fill={B} /><path d="M1 8.500H17M1 13H17M6.500 4V18M11.500 4V18M1 17.500H17" stroke={T} /></>,
  <><path d="M1 1H17V18H1Z" fill={W} /><path d="M12 4H17V18H12ZM1 14H17V18H1Z" fill={L} /><path d="M1 1H17V4H1Z" fill={B} /><path d="M1 8.500H17M1 13H17M6.500 4V18M11.500 4V18M1 17.500H17M17 1V18" stroke={T} /></>,
  <path d="M4.500 18V2.200H10Q13.500 2.200 13.500 6T10 9.800H5M9 10 14 18" stroke={B} strokeWidth="3.200" />,
  <path d="M2 6.500H4.500M8 6.500H10.500M14 6.500H16.500" stroke={W} strokeWidth="2" />,
];

function VisGrid() {
  return (
    <div className="h-[124px] bg-[#464446] pt-[5px] pl-[9px]">
      <div className="grid grid-cols-[repeat(6,28px)] auto-rows-[24px]">
        {visIcons.map((v, i) => (
          <div key={i} className={i === 13 ? "-mt-0.5 -ml-0.5 h-[22px] w-[22px] border-2 border-[#deb245] bg-[#fdfdfd] p-px" : ""}>
            <svg width={i === 13 ? 16 : 18} height={i === 13 ? 16 : 18} viewBox="0 0 18 18" className="block overflow-visible" fill="none">
              {v}
            </svg>
          </div>
        ))}
      </div>
    </div>
  );
}

const Chev = ({ up }: { up?: boolean }) => (
  <Ico w={12} h={7}>
    <path d={up ? "M.6 6.300 6 .8 11.400 6.300" : "M.6.700 6 6.200 11.400.700"} stroke={T} strokeWidth="1.200" />
  </Ico>
);

function Toggle({ on }: { on?: boolean }) {
  return (
    <Ico w={30} h={16}>
      <path d={on ? "M0 8.500H16" : "M15 8.500H30"} stroke={W} strokeWidth="2" />
      <circle cx={on ? 22.500 : 7.500} cy="8.500" r={on ? 7.300 : 6.700} stroke={on ? undefined : W} strokeWidth="1.600" fill={on ? W : "none"} />
    </Ico>
  );
}

function Row({ label, state }: { label: string; state?: "On" | "Off" }) {
  return (
    <div className="flex h-9 shrink-0 items-center border-b border-dashed border-[#212121] pt-px pl-[9px]">
      <Chev />
      <span className="w-[108px] shrink-0 pl-[6px] whitespace-nowrap">{label}</span>
      {state && (
        <>
          <span className="w-[30px] shrink-0">{state}</span>
          <Toggle on={state === "On"} />
        </>
      )}
    </div>
  );
}

function Dropdown() {
  const row = "flex h-[22px] items-center pl-1";
  return (
    <div className="absolute top-[23px] -left-px z-10 w-[90px] overflow-hidden rounded-b-sm border border-[#212121] bg-[#6e6559]">
      <div className={row}>
        <Ico w={10} h={10}><circle cx="3.500" cy="5" r="2.800" fill={W} /></Ico>
      </div>
      <div className={row}>
        <Ico w={10} h={10}><path d="M.5 1H9.500V9H.5Z" fill={W} /></Ico>
      </div>
      <div className={`${row} bg-[#8fb4ca]`}>
        <Ico w={10} h={10}><path d="M5 .5 9.500 5 5 9.500.5 5Z" fill={W} /></Ico>
      </div>
      <div className={row}>
        <Ico w={10} h={10}><path d="M5 1 9.500 9H.5Z" fill={W} /></Ico>
      </div>
    </div>
  );
}

function FormatPane() {
  return (
    <div className="relative flex h-[410px] flex-col overflow-hidden bg-[#464446] pt-1 text-[11.500px] text-[#fdfdfd]">
      <div className="ml-[4px] flex h-[31px] w-[193px] shrink-0 items-center bg-[#212121] pl-3 text-[12px] text-[#c9c2b5]">
        <Ico w={16} h={16}>
          <circle cx="10" cy="5.500" r="4.800" stroke={T} strokeWidth="1.200" />
          <path d="M6.500 9 .8 15.200" stroke={T} strokeWidth="1.300" />
        </Ico>
        <span className="pl-2">Search</span>
      </div>
      <div className="flex h-[38px] shrink-0 items-center border-b border-dashed border-[#212121] pt-1 pl-[9px]">
        <Chev up />
        <span className="pl-[6px]">Shapes</span>
      </div>
      <div className="flex h-9 shrink-0 items-center pl-[9px]">
        <span className="w-[61px] pt-[2px]">Size</span>
        <div className="flex h-6 w-[45px] items-center justify-end gap-3 border border-[#212121] bg-[#6e6559] pr-[3px]">
          <span>0</span>
          <span>%</span>
        </div>
        <Ico w={65} h={13} className="ml-2">
          <path d="M12 6.500H65" stroke={W} />
          <circle cx="6.500" cy="6.500" r="5.700" stroke={W} strokeWidth="1.300" />
        </Ico>
      </div>
      <div className="flex h-9 shrink-0 items-center pt-[2px] pl-[9px]">
        <span className="w-[89px] tracking-[-.15px]">Marker sh...</span>
        <div className="relative flex h-6 w-[90px] items-center border border-[#212121] bg-[#6e6559] pl-1">
          <Ico w={10} h={10}><path d="M5 .5 9.500 5 5 9.500.5 5Z" fill={W} /></Ico>
          <Ico w={6} h={4} className="mt-1 ml-[62px]"><path d="M0 0H6L3 3.500Z" fill={T} /></Ico>
          <Dropdown />
          <div className="absolute -top-[5px] left-[62px] z-20 h-[31px] w-[35px] border-[3px] border-[#deb245]" />
        </div>
      </div>
      <div className="flex h-10 shrink-0 items-center border-b border-dashed border-[#212121] pt-[7px] pl-[9px] tracking-[-.1px] text-[#deb245]">Revert to default</div>
      <Row label="Plot Area" />
      <Row label="Category labels" state="Off" />
      <Row label="Color border" state="Off" />
      <Row label="Color by category" state="Off" />
      <Row label="Title" state="On" />
      <Row label="Background" state="Off" />
      <div className="absolute top-[131px] right-0 h-[239px] w-[5px] bg-[#7e7870]" />
    </div>
  );
}

function VisPane() {
  return (
    <div className="flex w-[201px] shrink-0 flex-col border-l border-[#212121] bg-[#212121]">
      <div className="flex h-12 items-center justify-between pr-3 pl-3">
        <span className="text-[13px] font-semibold tracking-[.35px] whitespace-nowrap text-[#fdfdfd]">VISUALIZATIONS</span>
        <Ico w={7} h={12}><path d="M.7.700 6 6 .7 11.300" stroke={T} strokeWidth="1.200" /></Ico>
      </div>
      <VisGrid />
      <div className="flex h-9 pl-[13px]">
        <div className="flex w-[39px] items-center pl-[7px]">
          <Ico w={21} h={20}>
            <path d="M1 .7H16" stroke={W} strokeWidth="1.300" />
            <path d="M.7 3.700H19.300V9.300H.7ZM.7 12.700H19.300V19H.7Z" stroke={W} strokeWidth="1.200" strokeDasharray="2 1.300" />
          </Ico>
        </div>
        <div className="flex w-9 items-center justify-center border-b-[3px] border-[#deb245] pt-[3px]">
          <Ico w={18} h={21}>
            <path d="M1 1.200H14.500V5.200H1ZM14.500 3H17.300V7.500L8.500 9V11.500M6.500 11.500H10.500V20H6.500Z" stroke={W} strokeWidth="1.200" />
          </Ico>
        </div>
        <div className="flex w-[43px] items-center justify-center">
          <Ico w={21} h={21}>
            <circle cx="9" cy="8.800" r="7.800" stroke={W} strokeWidth="1.400" />
            <path d="M3 8 6.500 6 9 8 15 3.500M5.500 14V10M8.500 15.500V11M11.500 15V9.500M14 13V7.500M15 14.500 20 20" stroke={W} strokeWidth="1.400" />
          </Ico>
        </div>
      </div>
      <FormatPane />
    </div>
  );
}

function FieldsPane() {
  return (
    <div className="flex flex-1 flex-col items-center bg-[#212121] pt-[18px] pl-[2px]">
      <Ico w={7} h={12}><path d="M6.300.700 1 6 6.300 11.300" stroke={T} strokeWidth="1.200" /></Ico>
      <div className="mt-8 text-[14px] leading-none font-semibold tracking-[.3px] text-[#fdfdfd] [writing-mode:vertical-rl]">FIELDS</div>
    </div>
  );
}

export default function App() {
  return (
    <div className="flex h-[767px] w-[1286px] flex-col overflow-hidden border-x border-t border-[#70abd5] bg-[#fdfdfd] font-['Open_Sans',sans-serif]">
      <TitleBar />
      <MenuTabs />
      <Ribbon />
      <div className="flex h-px bg-[#d5d2c8]" />
      <div className="flex h-[618px]">
        <Rail />
        <div className="flex w-[1007px] shrink-0 flex-col bg-[#e4e6e1]">
          <Chart />
          <PageTabs />
        </div>
        <VisPane />
        <FieldsPane />
      </div>
      <div className="h-[2px] bg-[#2f2e2f]" />
    </div>
  );
}
